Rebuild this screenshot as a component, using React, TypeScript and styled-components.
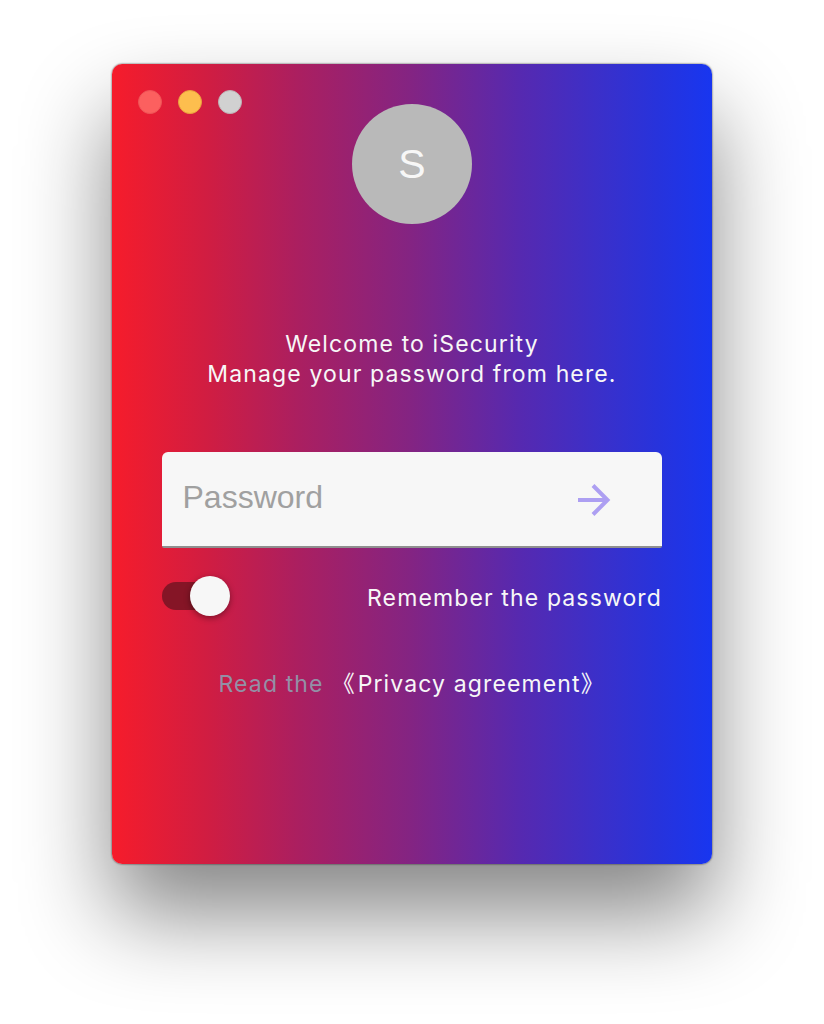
import React from "react";
import styled, { createGlobalStyle } from "styled-components";

const GlobalStyle = createGlobalStyle`
  * { box-sizing: border-box; }
  html, body { margin: 0; background: #fff; }
  body { overflow: hidden; }
`;

const Desktop = styled.main`
  width: 824px;
  height: 1024px;
  padding-top: 64px;
  display: flex;
  justify-content: center;
  align-items: flex-start;
  overflow: hidden;
  font-family: Inter, "Noto Sans CJK SC", sans-serif;
  font-weight: 400;
  font-size: 23px;
  line-height: 30px;
  letter-spacing: 1.13px;
`;

const Window = styled.section`
  position: relative;
  width: 600px;
  height: 800px;
  padding: 40px 50px 0;
  display: flex;
  flex-direction: column;
  align-items: center;
  border-radius: 10px;
  background: linear-gradient(
    90deg,
    #f61c2b 0%,
    #d01d42 16%,
    #ab1f60 31%,
    #832483 50%,
    #5629b0 68%,
    #3930cb 82%,
    #2733dc 91%,
    #1836f0 100%
  );
  box-shadow: 0 0 2px rgba(0, 0, 0, 0.8), 0 50px 90px rgba(0, 0, 0, 0.48);
`;

const WindowControls = styled.div`
  position: absolute;
  top: 26px;
  left: 26px;
  display: flex;
  gap: 16px;
`;

const ControlDot = styled.span<{ $fill: string; $edge: string }>`
  width: 24px;
  height: 24px;
  border-radius: 50%;
  border: 1px solid ${(p) => p.$edge};
  background: ${(p) => p.$fill};
`;

const Avatar = styled.div`
  width: 120px;
  height: 120px;
  border-radius: 50%;
  display: flex;
  align-items: center;
  justify-content: center;
  background: #b9b9b9;
  color: #f7f7f7;
  font: 41px/1 "Liberation Sans", sans-serif;
  letter-spacing: 0;
`;

const Welcome = styled.p`
  margin: 105px 0 0;
  color: #f7f7f7;
  text-align: center;
  white-space: nowrap;
`;

const PasswordField = styled.form`
  width: 500px;
  height: 96px;
  margin-top: 63px;
  padding: 0 48px 0 20px;
  display: flex;
  align-items: center;
  justify-content: space-between;
  border-radius: 6px 6px 2px 2px;
  background: linear-gradient(#f7f7f7 94px, #8f8f8f 94px);
`;

const PasswordInput = styled.input`
  width: 340px;
  height: 90px;
  padding: 0 0 6px 0.5px;
  border: 0;
  outline: 0;
  background: transparent;
  color: #555;
  font: 32px "Liberation Sans", sans-serif;
  &::placeholder { color: #a0a0a0; opacity: 1; }
`;

const SubmitButton = styled.button`
  width: 40px;
  height: 40px;
  padding: 0;
  border: 0;
  background: none;
  svg { display: block; }
`;

const RememberRow = styled.div`
  width: 500px;
  height: 40px;
  margin-top: 28px;
  display: flex;
  align-items: center;
  justify-content: space-between;
`;

const SwitchTrack = styled.span`
  width: 68px;
  height: 28px;
  display: flex;
  align-items: center;
  justify-content: flex-end;
  border-radius: 14px;
  background: #851526;
`;

const SwitchThumb = styled.span`
  flex: none;
  width: 40px;
  height: 40px;
  border-radius: 50%;
  background: #f7f7f7;
  box-shadow: 0 2px 6px rgba(0, 0, 0, 0.4);
`;

const Label = styled.span`
  padding-top: 3px;
  color: #f7f7f7;
  white-space: nowrap;
`;

const Agreement = styled.p`
  margin: 53px 0 0;
  width: 500px;
  padding-left: 56.5px;
  display: flex;
  color: #9390a6;
  white-space: nowrap;
`;

const PolicyLink = styled.a`
  margin-left: 8px;
  color: #f7f7f7;
`;

const OpeningBracket = styled.span`
  letter-spacing: 3px;
`;

export default function App() {
  return (
    <>
      <GlobalStyle />
      <Desktop>
        <Window>
          <WindowControls>
            <ControlDot $fill="#fc605f" $edge="#ee5457" />
            <ControlDot $fill="#fdbe4e" $edge="#e9a23d" />
            <ControlDot $fill="#d1d1d1" $edge="#bdb2b5" />
          </WindowControls>
          <Avatar>S</Avatar>
          <Welcome>
            Welcome to iSecurity
            <br />
            Manage your password from here.
          </Welcome>
          <PasswordField onSubmit={(e) => e.preventDefault()}>
            <PasswordInput type="password" placeholder="Password" />
            <SubmitButton type="submit" aria-label="Continue">
              <svg width="40" height="40" viewBox="0 0 40 40" fill="none" stroke="#ad9ff2" strokeWidth="4">
                <path d="M4 20H34M19 5.5L33.5 20L19 34.5" />
              </svg>
            </SubmitButton>
          </PasswordField>
          <RememberRow>
            <SwitchTrack>
              <SwitchThumb />
            </SwitchTrack>
            <Label>Remember the password</Label>
          </RememberRow>
          <Agreement>
            <span>Read the</span>
            <PolicyLink>
              <OpeningBracket>《</OpeningBracket>Privacy agreement》
            </PolicyLink>
          </Agreement>
        </Window>
      </Desktop>
    </>
  );
}
